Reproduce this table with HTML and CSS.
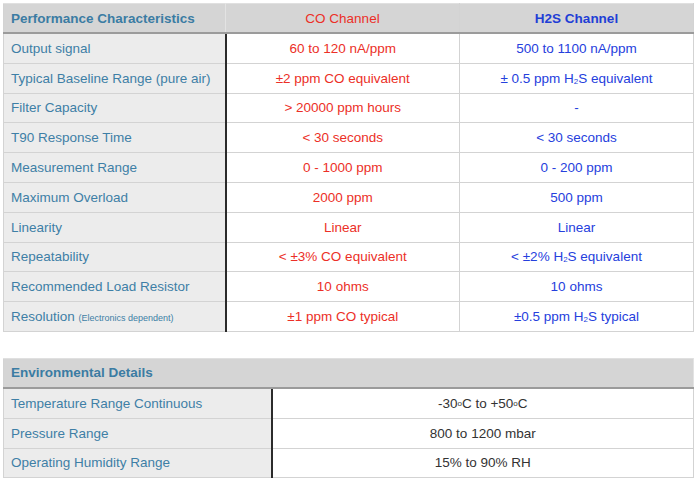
FILE: index.html
```html
<!DOCTYPE html>
<html>
<head>
<meta charset="utf-8">
<link rel="stylesheet" href="styles.css">
</head>
<body>
<table class="spec perf">
  <colgroup><col class="c-label"><col class="c-co"><col class="c-h2s"></colgroup>
  <thead>
    <tr>
      <th class="label">Performance Characteristics</th>
      <th class="co head-co">CO Channel</th>
      <th class="h2s head-h2s">H2S Channel</th>
    </tr>
  </thead>
  <tbody>
    <tr><td class="label">Output signal</td><td class="co">60 to 120 nA/ppm</td><td class="h2s">500 to 1100 nA/ppm</td></tr>
    <tr><td class="label">Typical Baseline Range (pure air)</td><td class="co">±2 ppm CO equivalent</td><td class="h2s">± 0.5 ppm H<sub>2</sub>S equivalent</td></tr>
    <tr><td class="label">Filter Capacity</td><td class="co">&gt; 20000 ppm hours</td><td class="h2s">-</td></tr>
    <tr><td class="label">T90 Response Time</td><td class="co">&lt; 30 seconds</td><td class="h2s">&lt; 30 seconds</td></tr>
    <tr><td class="label">Measurement Range</td><td class="co">0 - 1000 ppm</td><td class="h2s">0 - 200 ppm</td></tr>
    <tr><td class="label">Maximum Overload</td><td class="co">2000 ppm</td><td class="h2s">500 ppm</td></tr>
    <tr><td class="label">Linearity</td><td class="co">Linear</td><td class="h2s">Linear</td></tr>
    <tr><td class="label">Repeatability</td><td class="co">&lt; ±3% CO equivalent</td><td class="h2s">&lt; ±2% H<sub>2</sub>S equivalent</td></tr>
    <tr><td class="label">Recommended Load Resistor</td><td class="co">10 ohms</td><td class="h2s">10 ohms</td></tr>
    <tr><td class="label">Resolution <span class="note">(Electronics dependent)</span></td><td class="co">±1 ppm CO typical</td><td class="h2s">±0.5 ppm H<sub>2</sub>S typical</td></tr>
  </tbody>
</table>

<table class="spec env">
  <colgroup><col class="e-label"><col class="e-val"></colgroup>
  <thead>
    <tr><th class="label" colspan="2">Environmental Details</th></tr>
  </thead>
  <tbody>
    <tr><td class="label">Temperature Range Continuous</td><td class="val">-30<sup>o</sup>C to +50<sup>o</sup>C</td></tr>
    <tr><td class="label">Pressure Range</td><td class="val">800 to 1200 mbar</td></tr>
    <tr><td class="label">Operating Humidity Range</td><td class="val">15% to 90% RH</td></tr>
  </tbody>
</table>
</body>
</html>
```

FILE: styles.css
```css
html, body {
  margin: 0;
  padding: 0;
  background: #ffffff;
}

body {
  padding: 3px 0 0 3px;
  font-family: "Liberation Sans", Arial, Helvetica, sans-serif;
  font-size: 13.5px;
}

.spec {
  border-collapse: collapse;
  table-layout: fixed;
  width: 690px;
}

.perf { margin-bottom: 26px; }

.c-label { width: 222px; }
.c-co { width: 234px; }
.c-h2s { width: 234px; }

.e-label { width: 268px; }
.e-val { width: 422px; }

.spec th,
.spec td {
  height: 27.8px;
  padding: 1px 7px 0 7px;
  border: 1px solid #d3d3d3;
  line-height: 16px;
  white-space: nowrap;
  vertical-align: middle;
}

.spec thead th {
  height: 27px;
  background: #d5d5d5;
  border-top: 1px solid #e0e0e0;
  border-bottom: 2px solid #9b9b9b;
  font-weight: bold;
}

.spec th.label {
  text-align: left;
  color: #3b7ca3;
}

.spec td.label {
  background: #ececec;
  color: #3e7fa6;
  border-right: 2px solid #2b2b2b;
}

.spec thead th.label { border-right: 1px solid #e3e3e3; }

.co, .h2s, .val { text-align: center; }

.co { color: #ec2f27; }
.h2s { color: #2540dd; }
.val { color: #333333; }

.spec th.head-co { font-weight: normal; color: #ec2f27; }
.spec th.head-h2s { color: #1f3ed6; }

.note { font-size: 9px; }

sub {
  font-size: 8px;
  line-height: 0;
  vertical-align: baseline;
  position: relative;
  top: 1px;
}

sup {
  font-size: 8px;
  line-height: 0;
  vertical-align: baseline;
  position: relative;
  top: -2px;
}
```
